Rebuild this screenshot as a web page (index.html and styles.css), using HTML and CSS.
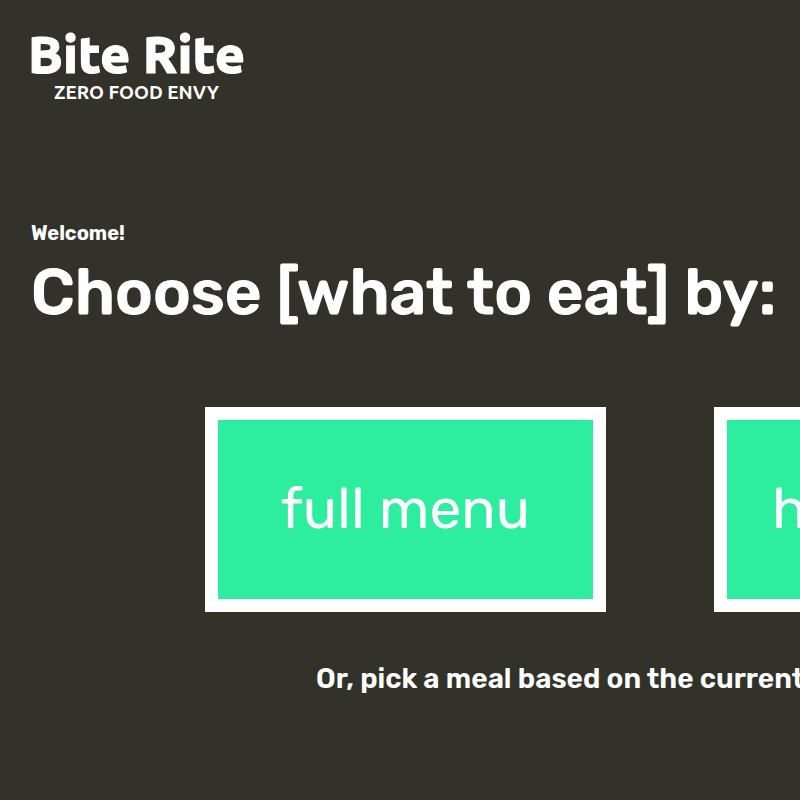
FILE: index.html
```html
<!DOCTYPE html>
<html lang="en">
<head>
<meta charset="utf-8">
<meta name="viewport" content="width=device-width, initial-scale=1">
<title>Bite Rite</title>
<link rel="stylesheet" href="styles.css">
</head>
<body>
<header class="site-header">
<a class="brand" href="#">
<span class="brand-name">Bite Rite</span>
<span class="brand-tagline">ZERO FOOD ENVY</span>
</a>
</header>
<main class="main">
<p class="welcome">Welcome!</p>
<h1 class="title">Choose [what to eat] by:</h1>
<div class="choices">
<button class="choice" type="button">full menu</button>
<button class="choice choice-start" type="button">h</button>
</div>
<p class="hint">Or, pick a meal based on the current</p>
</main>
</body>
</html>
```
FILE: styles.css
```css
* {
  box-sizing: border-box;
}

body {
  margin: 0;
  min-height: 100vh;
  background: #33322a;
  color: #fff;
  font-family: Rubik, Roboto, "Noto Sans", sans-serif;
}

.site-header {
  display: flex;
  padding: 24px 28px 0;
}

.brand {
  display: flex;
  flex-direction: column;
  align-items: center;
  color: inherit;
  text-decoration: none;
  font-family: Ubuntu, "Noto Sans", sans-serif;
}

.brand-name {
  font-size: 52px;
  font-weight: 800;
  line-height: 60px;
  -webkit-text-stroke: 1px #fff;
}

.brand-tagline {
  font-size: 19px;
  font-weight: 600;
  line-height: 16px;
}

.main {
  padding: 120px 0 0 31px;
  overflow: hidden;
}

.welcome {
  margin: 0;
  font-size: 20px;
  font-weight: 700;
  line-height: 26px;
}

.title {
  margin: 8px 0 0;
  font-size: 64px;
  font-weight: 500;
  line-height: 76px;
  white-space: nowrap;
  -webkit-text-stroke: 1px #fff;
}

.choices {
  display: flex;
  gap: 108px;
  margin: 77px 0 0 174px;
}

.choice {
  flex: 0 0 401px;
  padding: 54px 0 55px;
  border: 13px solid #fff;
  border-radius: 0;
  background: #2dee9f;
  color: #fff;
  font-family: inherit;
  font-size: 57px;
  font-weight: 400;
  line-height: 70px;
}

.choice-start {
  padding-left: 45px;
  text-align: left;
}

.hint {
  margin: 51px 0 0 285px;
  font-size: 28px;
  font-weight: 600;
  line-height: 32px;
  white-space: nowrap;
}
```
